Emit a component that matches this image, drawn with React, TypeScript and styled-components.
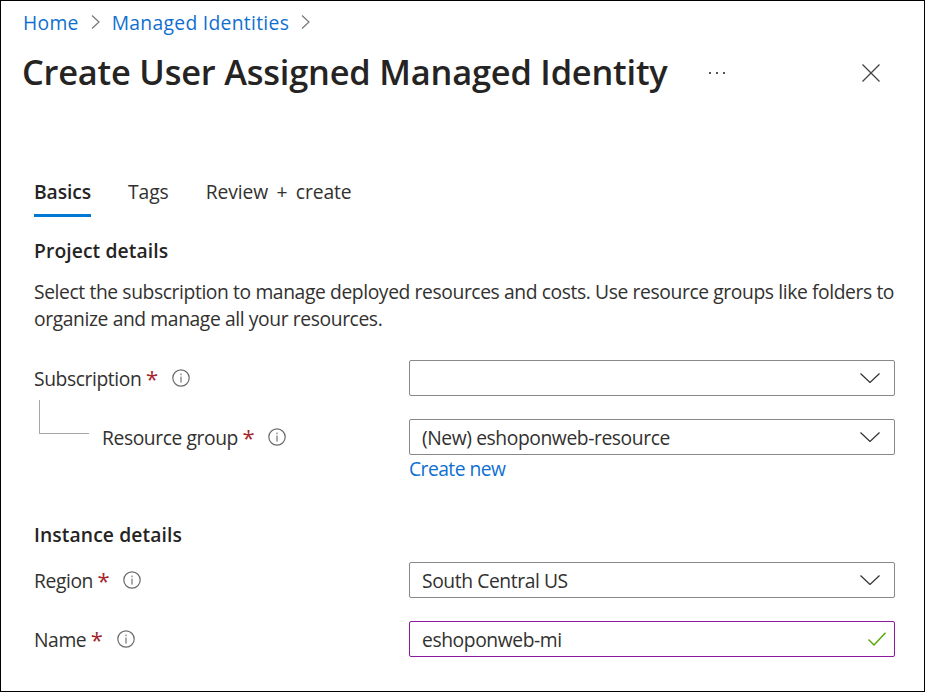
import { createGlobalStyle } from "styled-components";
import styled from "styled-components";

const GlobalStyle = createGlobalStyle`
  * { box-sizing: border-box; }
  html, body { margin: 0; padding: 0; background: #fff; }
  body {
    font-family: "Open Sans", "Noto Sans", "Liberation Sans", sans-serif;
    color: #323130;
  }
`;

function Chevron() {
  return (
    <svg width="20" height="10" viewBox="0 0 20 10" fill="none">
      <path d="M0.5 0.5 L10 9.5 L19.5 0.5" stroke="#323130" strokeWidth="1.2" />
    </svg>
  );
}

function Crumb() {
  return (
    <svg width="9" height="14" viewBox="0 0 9 14" fill="none">
      <path d="M1 0.5 L8 7 L1 13.5" stroke="#777" strokeWidth="1.2" />
    </svg>
  );
}

function Info() {
  return (
    <svg width="18" height="18" viewBox="0 0 18 18" fill="none">
      <circle cx="9" cy="9" r="8.2" stroke="#6b6a69" strokeWidth="1.2" />
      <rect x="8.3" y="7.6" width="1.4" height="6" fill="#8a8886" />
      <rect x="8.3" y="4.6" width="1.4" height="1.6" fill="#8a8886" />
    </svg>
  );
}

export default function App() {
  return (
    <>
      <GlobalStyle />
      <Frame>
        <Breadcrumb>
          <CrumbLink>Home</CrumbLink>
          <Crumb />
          <CrumbLink>Managed Identities</CrumbLink>
          <Crumb />
        </Breadcrumb>

        <TitleRow>
          <Title>Create User Assigned Managed Identity</Title>
          <More>
            <i />
            <i />
            <i />
          </More>
          <CloseIcon width="18" height="18" viewBox="0 0 18 18" fill="none">
            <path d="M0.5 0.5 L17.5 17.5 M17.5 0.5 L0.5 17.5" stroke="#444" strokeWidth="1.3" />
          </CloseIcon>
        </TitleRow>

        <Body>
          <Tabs>
            <Tab $active>Basics</Tab>
            <Tab>Tags</Tab>
            <Tab>Review + create</Tab>
          </Tabs>

          <SectionHeading>Project details</SectionHeading>
          <Description>
            Select the subscription to manage deployed resources and costs. Use resource groups like folders to
            organize and manage all your resources.
          </Description>

          <Form $top={28}>
            <Label>
              Subscription <Star>*</Star>
              <Info />
            </Label>
            <Field />
            <Chain />
            <Label $indent>
              Resource group <Star>*</Star>
              <Info />
            </Label>
            <div>
              <Field>(New) eshoponweb-resource</Field>
              <CreateNew>Create new</CreateNew>
            </div>
          </Form>

          <SectionHeading $top={38}>Instance details</SectionHeading>
          <Form $top={13}>
            <Label>
              Region <Star>*</Star>
              <Info />
            </Label>
            <Field>South Central US</Field>
            <Label>
              Name <Star>*</Star>
              <Info />
            </Label>
            <Field $valid>eshoponweb-mi</Field>
          </Form>
        </Body>
      </Frame>
    </>
  );
}

function Field({ children, $valid }: { children?: React.ReactNode; $valid?: boolean }) {
  return (
    <FieldBox $valid={$valid}>
      <span>{children}</span>
      {$valid ? (
        <svg width="18" height="14" viewBox="0 0 18 14" fill="none">
          <path d="M0.5 7.5 L6 13 L17.5 0.8" stroke="#57a300" strokeWidth="1.4" />
        </svg>
      ) : (
        <Chevron />
      )}
    </FieldBox>
  );
}

const Frame = styled.div`
  position: relative;
  width: 925px;
  height: 692px;
  overflow: hidden;
  border: 1px solid #000;
  padding: 6px 0 0 21px;
`;

const Breadcrumb = styled.nav`
  display: flex;
  align-items: center;
  gap: 12px;
  height: 30px;
  padding-left: 1px;
`;

const CrumbLink = styled.a`
  color: #0f6fd1;
  font-size: 19.3px;
  letter-spacing: 0.3px;
`;

const TitleRow = styled.div`
  display: flex;
  align-items: center;
  height: 40px;
  margin-top: 16px;
`;

const Title = styled.h1`
  margin: 0;
  width: 687px;
  padding-bottom: 4px;
  font-size: 34.4px;
  font-weight: 600;
  color: #252423;
  letter-spacing: -0.2px;
  white-space: nowrap;
`;

const More = styled.div`
  display: flex;
  gap: 5px;
  width: 153px;

  i {
    width: 2px;
    height: 2px;
    background: #555;
  }
`;

const CloseIcon = styled.svg`
  display: block;
`;

const Body = styled.div`
  padding: 0 0 0 12px;
`;

const Tabs = styled.div`
  display: flex;
  gap: 37px;
  margin-top: 82px;
`;

const Tab = styled.div<{ $active?: boolean }>`
  height: 42px;
  padding-top: 3px;
  font-size: 19.3px;
  letter-spacing: -0.1px;
  word-spacing: 3.5px;
  font-weight: ${(p) => (p.$active ? 600 : 400)};
  color: ${(p) => (p.$active ? "#252423" : "#323130")};
  border-bottom: 3px solid ${(p) => (p.$active ? "#0078d4" : "transparent")};
`;

const SectionHeading = styled.h2<{ $top?: number }>`
  margin: ${(p) => p.$top ?? 20}px 0 0;
  font-size: 19.3px;
  line-height: 28px;
  font-weight: 600;
  letter-spacing: 0.1px;
  color: #252423;
`;

const Description = styled.p`
  margin: 13px 0 0;
  width: 870px;
  font-size: 19.3px;
  line-height: 27px;
  letter-spacing: -0.4px;
  color: #323130;
`;

const Form = styled.div<{ $top: number }>`
  position: relative;
  display: grid;
  grid-template-columns: 375px 486px;
  row-gap: 23px;
  margin-top: ${(p) => p.$top}px;
`;

const Label = styled.label<{ $indent?: boolean }>`
  display: flex;
  align-items: center;
  height: 36px;
  padding-left: ${(p) => (p.$indent ? 68 : 0)}px;
  font-size: 19.3px;
  letter-spacing: -0.42px;
  white-space: pre;

  svg {
    margin-left: 14px;
  }
`;

const Star = styled.span`
  color: #a4262c;
  font-size: 22px;
  line-height: 1;
`;

const FieldBox = styled.div<{ $valid?: boolean }>`
  display: flex;
  align-items: center;
  justify-content: space-between;
  height: 36px;
  padding: 0 ${(p) => (p.$valid ? 8 : 14)}px 0 12px;
  border: 1px solid ${(p) => (p.$valid ? "#8b1a9e" : "#8a8886")};
  border-radius: 2px;
  font-size: 19.3px;
  letter-spacing: -0.42px;
`;

const CreateNew = styled.a`
  display: block;
  line-height: 28px;
  font-size: 19.3px;
  letter-spacing: -0.55px;
  color: #0f6fd1;
`;

const Chain = styled.div`
  position: absolute;
  left: 5px;
  top: 40px;
  width: 50px;
  height: 34px;
  border-left: 1px solid #a6a6a6;
  border-bottom: 1px solid #a6a6a6;
`;
